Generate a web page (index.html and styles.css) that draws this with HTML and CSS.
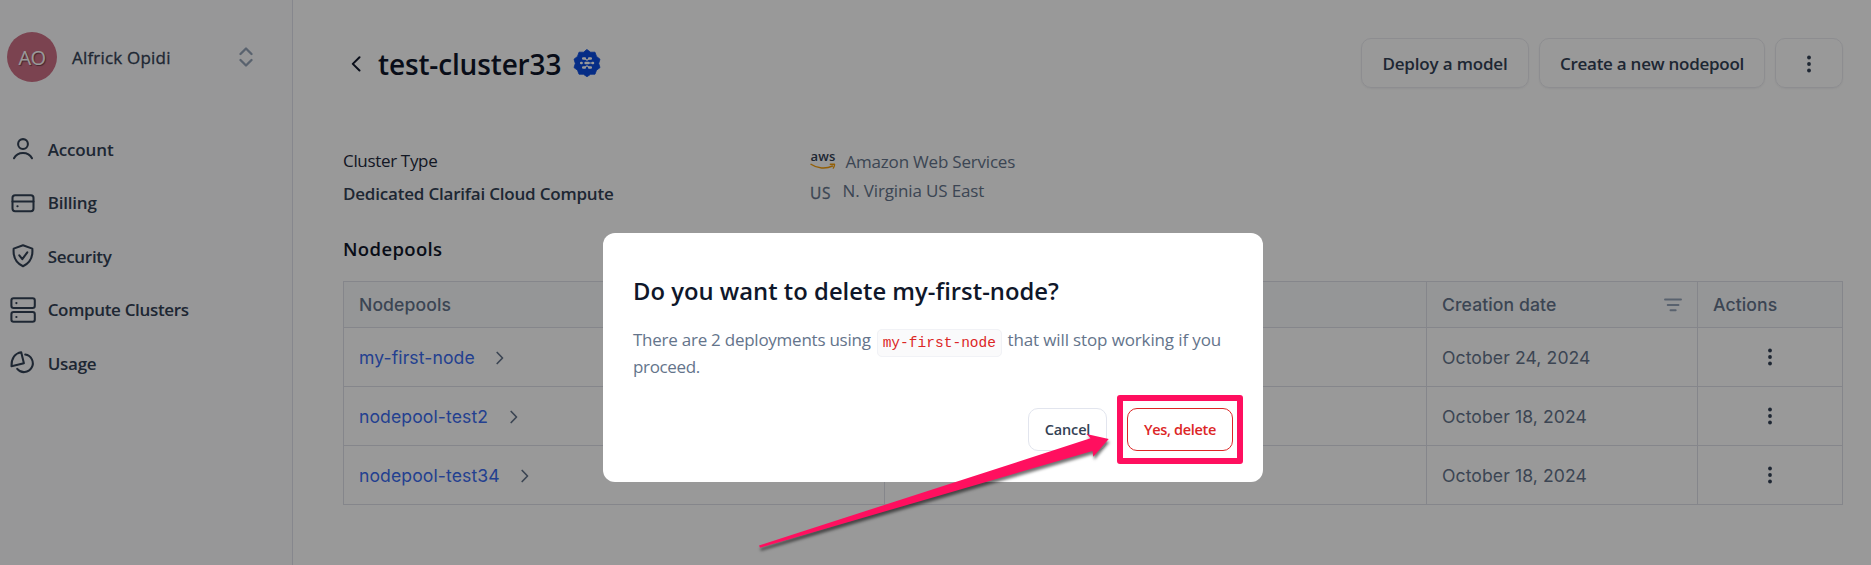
FILE: index.html
```
<!DOCTYPE html>
<html lang="en">
<head>
<meta charset="utf-8">
<title>test-cluster33</title>
<link rel="stylesheet" href="styles.css">
</head>
<body>
<div class="app">
  <aside class="sidebar">
    <div class="user">
      <span class="avatar">AO</span>
      <span class="user-name">Alfrick Opidi</span>
      <svg class="user-switch" width="14" height="20" viewBox="0 0 14 20"><path d="M1.500 7 7 1.500 12.500 7M1.500 13 7 18.500 12.500 13"/></svg>
    </div>
    <nav class="nav">
      <a class="nav-item account"><svg class="icon" width="26" height="26" viewBox="0 0 26 26"><circle cx="13" cy="8" r="4.900"/><path d="M4 22.300C5.800 18.700 9 16.900 13 16.900S20.200 18.700 22 22.300"/></svg><span>Account</span></a>
      <a class="nav-item billing"><svg class="icon" width="26" height="26" viewBox="0 0 26 26"><rect x="2.500" y="5.200" width="21" height="16" rx="2.600"/><path d="M2.500 11.500h21M7.400 16.300h.2"/></svg><span>Billing</span></a>
      <a class="nav-item security"><svg class="icon" width="26" height="26" viewBox="0 0 26 26"><path d="M13 2.300 22.300 5.600C23 13 21 19.500 13 23.200 5 19.500 3 13 3.700 5.600Z"/><path d="M9.300 12.300 12.300 16.200 17.300 9.300"/></svg><span>Security</span></a>
      <a class="nav-item clusters"><svg class="icon" width="26" height="26" viewBox="0 0 26 26"><rect x="1.400" y="1.200" width="23.400" height="9.800" rx="2.200"/><rect x="1.400" y="15" width="23.400" height="9.800" rx="2.200"/><path d="M6.300 6.100h.2M6.300 19.900h.2"/></svg><span>Compute Clusters</span></a>
      <a class="nav-item usage"><svg class="icon" width="26" height="26" viewBox="0 0 26 26"><path d="M11.200 2.200C5 3.200 1.300 8.500 1.500 16.300L13.900 13.300Z"/><path d="M15.200 4.600A8.800 8.800 0 1 1 7.200 18.900"/></svg><span>Usage</span></a>
    </nav>
  </aside>
  <main class="main">
    <header class="header">
      <svg class="back" width="10" height="16" viewBox="0 0 10 16"><path d="M8.500 1.300 1.800 7.900l6.700 6.600"/></svg>
      <h1 class="title">test-cluster33</h1>
      <svg class="badge" width="28" height="28" viewBox="0 0 28 28">
        <path class="badge-shape" d="M14 .6 17.600 3.200 22 3.200 23.500 7.400 27 10.200 25.700 14.400 27 18.600 23.500 21.200 22 25.200 17.600 25.300 14 27.700 10.400 25.300 6 25.200 4.500 21.200 1 18.600 2.300 14.400 1 10.200 4.500 7.400 6 3.200 10.400 3.200Z"/>
        <path class="badge-mark" d="M10.200 9.400h1.700M16.100 9.400h1.700M8.200 14h.4M12.600 14h2.800M19.600 14h.4M10.200 18.600h1.700M16.100 18.600h1.700"/>
        <path class="badge-link" d="M11.500 9.400 14 11.200 16.500 9.400M11.500 18.600 14 16.800 16.500 18.600M14 14h6"/>
      </svg>
      <div class="actions">
        <button class="btn deploy">Deploy a model</button>
        <button class="btn create">Create a new nodepool</button>
        <button class="btn more" aria-label="More"><svg class="dots" width="6" height="18" viewBox="0 0 6 18"><circle cx="3" cy="2.500" r="1.900"/><circle cx="3" cy="9" r="1.900"/><circle cx="3" cy="15.500" r="1.900"/></svg></button>
      </div>
    </header>
    <section class="info">
      <div class="info-type">
        <div class="info-label">Cluster Type</div>
        <div class="info-value">Dedicated Clarifai Cloud Compute</div>
      </div>
      <div class="info-cloud">
        <div class="provider">
          <span class="aws"><span class="aws-text">aws</span><svg class="aws-smile" width="26" height="7" viewBox="0 0 26 7"><path d="M1 1.300C7 5.600 16 6.200 22.500 3M20.300 1.300h4.200c.2 1.500-.4 2.700-1.200 3.800"/></svg></span>
          <span class="provider-name">Amazon Web Services</span>
        </div>
        <div class="region"><span class="flag">US</span><span class="region-name">N. Virginia US East</span></div>
      </div>
    </section>
    <h2 class="section-title">Nodepools</h2>
    <div class="table">
      <div class="row head">
        <div class="cell">Nodepools</div><div class="cell"></div>
        <div class="cell date">Creation date<svg class="filter" width="18" height="14" viewBox="0 0 18 14"><path d="M1 1.500h16M3.700 7h10.800M6.500 12.300h5.200"/></svg></div>
        <div class="cell">Actions</div>
      </div>
      <div class="row">
        <div class="cell link">my-first-node<svg class="chevron" width="8" height="14" viewBox="0 0 8 14"><path d="M1.200 1.500 6.500 7l-5.300 5.500"/></svg></div><div class="cell"></div>
        <div class="cell">October 24, 2024</div>
        <div class="cell menu"><svg class="dots" width="6" height="18" viewBox="0 0 6 18"><circle cx="3" cy="2.500" r="1.900"/><circle cx="3" cy="9" r="1.900"/><circle cx="3" cy="15.500" r="1.900"/></svg></div>
      </div>
      <div class="row">
        <div class="cell link">nodepool-test2<svg class="chevron" width="8" height="14" viewBox="0 0 8 14"><path d="M1.200 1.500 6.500 7l-5.300 5.500"/></svg></div><div class="cell"></div>
        <div class="cell">October 18, 2024</div>
        <div class="cell menu"><svg class="dots" width="6" height="18" viewBox="0 0 6 18"><circle cx="3" cy="2.500" r="1.900"/><circle cx="3" cy="9" r="1.900"/><circle cx="3" cy="15.500" r="1.900"/></svg></div>
      </div>
      <div class="row">
        <div class="cell link">nodepool-test34<svg class="chevron" width="8" height="14" viewBox="0 0 8 14"><path d="M1.200 1.500 6.500 7l-5.300 5.500"/></svg></div><div class="cell"></div>
        <div class="cell">October 18, 2024</div>
        <div class="cell menu"><svg class="dots" width="6" height="18" viewBox="0 0 6 18"><circle cx="3" cy="2.500" r="1.900"/><circle cx="3" cy="9" r="1.900"/><circle cx="3" cy="15.500" r="1.900"/></svg></div>
      </div>
    </div>
  </main>
</div>
<div class="overlay">
  <div class="modal" role="dialog">
    <h3 class="modal-title">Do you want to delete my-first-node?</h3>
    <p class="modal-text"><span class="before">There are 2 deployments using</span><code class="code">my-first-node</code><span class="after">that will stop working if you</span><br><span class="last">proceed.</span></p>
    <div class="modal-actions">
      <button class="modal-btn cancel">Cancel</button>
      <button class="modal-btn confirm">Yes, delete</button>
    </div>
  </div>
</div>
<svg class="annotation" width="1871" height="565" viewBox="0 0 1871 565">
  <rect x="1120" y="398" width="120" height="63"/>
  <path d="M759 545.500 1090.500 438.300 1086.500 434 1108.700 439 1093.300 456.700 1092.500 451 760 547.800Z"/>
</svg>
</body>
</html>
```
FILE: styles.css
```
* { box-sizing: border-box; }
body {
  margin: 0;
  height: 565px;
  overflow: hidden;
  background: #fff;
  color: #334155;
  font: 400 17px/24px "Open Sans", "Noto Sans", sans-serif;
}
h1, h2, h3, p { margin: 0; }
button { font: inherit; color: inherit; padding: 0; }
svg { display: block; flex: none; fill: none; stroke-linecap: round; stroke-linejoin: round; }
span, .cell, button, h1, h2, h3 { white-space: nowrap; }

.app { display: flex; height: 565px; }

/* Sidebar */
.sidebar { width: 293px; padding: 32px 0 0 7px; background: #fcfcfd; border-right: 1px solid #e0e2ec; }
.user { display: flex; align-items: center; height: 50px; padding-right: 39px; }
.avatar {
  width: 50px; height: 50px; border-radius: 50%;
  background: #cd7086; color: #fff;
  font-size: 20px; line-height: 52px; text-align: center; letter-spacing: -.5px;
  text-shadow: 1px 1px 1px rgba(0, 0, 0, .45);
}
.user-name { margin-left: 15px; padding-top: 1px; font-weight: 500; letter-spacing: .2px; -webkit-text-stroke: .3px #334155; }
.user-switch { margin-left: auto; stroke: #94a3b8; stroke-width: 2.300; }
.nav { padding-top: 40.500px; font-weight: 600; }
.nav-item { display: flex; align-items: center; height: 53.500px; padding-left: 2.700px; gap: 12px; }
.nav-item span { padding-top: 1px; }
.icon { stroke: #334155; stroke-width: 2.050; }
.account { letter-spacing: -.15px; }
.billing { letter-spacing: -.2px; }
.security { letter-spacing: -.3px; }
.clusters { letter-spacing: -.34px; }
.usage { letter-spacing: -.25px; }

/* Page header */
.main { flex: 1; padding: 38px 28px 0 50px; }
.header { display: flex; align-items: center; height: 50px; padding-left: 8px; }
.back { stroke: #0f172a; stroke-width: 2; position: relative; top: 1px; }
.title { margin-left: 17px; padding-top: 1px; color: #0f172a; font-size: 28px; font-weight: 600; letter-spacing: -.15px; line-height: 40px; width: 195px; }
.badge-shape { fill: #0b4be0; stroke: #0b4be0; stroke-width: .8; }
.badge-mark { stroke: #fff; stroke-width: 2.500; }
.badge-link { stroke: #fff; stroke-width: 1.100; }
.actions { display: flex; gap: 10px; margin-left: auto; }
.btn {
  display: flex; align-items: center; justify-content: center; height: 50px; padding-top: 1px;
  border: 1px solid #ebecf1; border-radius: 10px; background: none;
  box-shadow: 0 1px 2px rgba(16, 24, 40, .05); font-weight: 600;
}
.deploy { width: 168px; letter-spacing: -.17px; }
.create { width: 226px; letter-spacing: -.25px; }
.more { width: 68px; }
.dots { fill: #334155; }

/* Cluster facts */
.info { display: flex; padding-top: 61px; }
.info-type { width: 467px; line-height: 24px; }
.info-label { color: #1e293b; letter-spacing: -.33px; }
.info-value { margin-top: 9px; font-weight: 600; letter-spacing: -.2px; }
.info-cloud { padding-top: 1px; color: #64748b; }
.provider, .region { display: flex; align-items: center; height: 24px; }
.aws { display: flex; flex-direction: column; width: 35.500px; }
.aws-text { color: #334155; font-size: 13px; font-weight: 600; line-height: 11px; letter-spacing: .2px; padding-left: .5px; margin-top: -3px; }
.aws-smile { stroke: #f59e0b; stroke-width: 1.400; margin-top: 1px; }
.provider-name { letter-spacing: -.2px; }
.region { margin-top: 5px; }
.flag { width: 32.500px; padding: 4px 0 0 0; font-size: 15.500px; letter-spacing: .6px; -webkit-text-stroke: .3px #64748b; }
.region-name { letter-spacing: -.14px; }
.section-title { margin-top: 30px; color: #0f172a; font-size: 18.500px; font-weight: 600; line-height: 26px; letter-spacing: .36px; }

/* Nodepool table */
.table { margin-top: 19px; width: 1500px; border: 1px solid #dee0e8; font: 400 17.600px/24px Inter, sans-serif; letter-spacing: .09px; color: #64748b; }
.row { display: grid; grid-template-columns: 540px 542px 271px 145px; height: 59px; border-top: 1px solid #dee0e8; }
.row.head { height: 45px; border-top: 0; background: #f8fafc; font-weight: 500; }
.cell { display: flex; align-items: center; padding: 1px 0 0 15px; border-left: 1px solid #dee0e8; }
.cell:first-child { border-left: 0; }
.row .date { padding-right: 15px; }
.filter { margin-left: auto; stroke: #94a3b8; stroke-width: 1.900; }
.link { color: #3b6cf0; }
.chevron { margin-left: 21.500px; stroke: #64748b; stroke-width: 1.700; }
.row .menu { justify-content: center; padding: 0; }

/* Dialog */
.overlay { position: absolute; inset: 0; background: rgba(0, 0, 0, .4); padding: 233px 0 0 603px; }
.modal { width: 660px; height: 248.500px; padding: 42px 30px 0 30px; border-radius: 12px; background: #fff; }
.modal-title { color: #0f172a; font-size: 23.800px; line-height: 32px; font-weight: 600; letter-spacing: .02px; }
.modal-text { margin-top: 19px; line-height: 27px; color: #64748b; }
.before { letter-spacing: -.25px; }
.code {
  position: relative; top: 1px; margin: 0 5.500px 0 6px; padding: 5px 5px 5px;
  border: 1px solid #f1f2f6; border-radius: 5px; background: #fafafb;
  color: #dc2626; font: 14.500px/14px "Liberation Mono", monospace; letter-spacing: .02px;
}
.after { letter-spacing: -.13px; }
.last { letter-spacing: -.35px; }
.modal-actions { display: flex; justify-content: flex-end; gap: 20px; margin-top: 28px; }
.modal-btn { height: 43px; border: 1px solid #e2e5ee; border-radius: 10px; background: #fff; font-size: 14.500px; font-weight: 600; }
.cancel { width: 79px; letter-spacing: -.15px; }
.confirm { width: 106px; border-color: #dc2626; color: #dc2626; letter-spacing: -.33px; }

/* Callout drawn over the dialog */
.annotation { position: absolute; inset: 0; }
.annotation rect { stroke: #ff0f5f; stroke-width: 6; stroke-linejoin: round; }
.annotation path { fill: #ff0f5f; filter: drop-shadow(1px 3px 1.500px rgba(0, 0, 0, .55)); }
```
